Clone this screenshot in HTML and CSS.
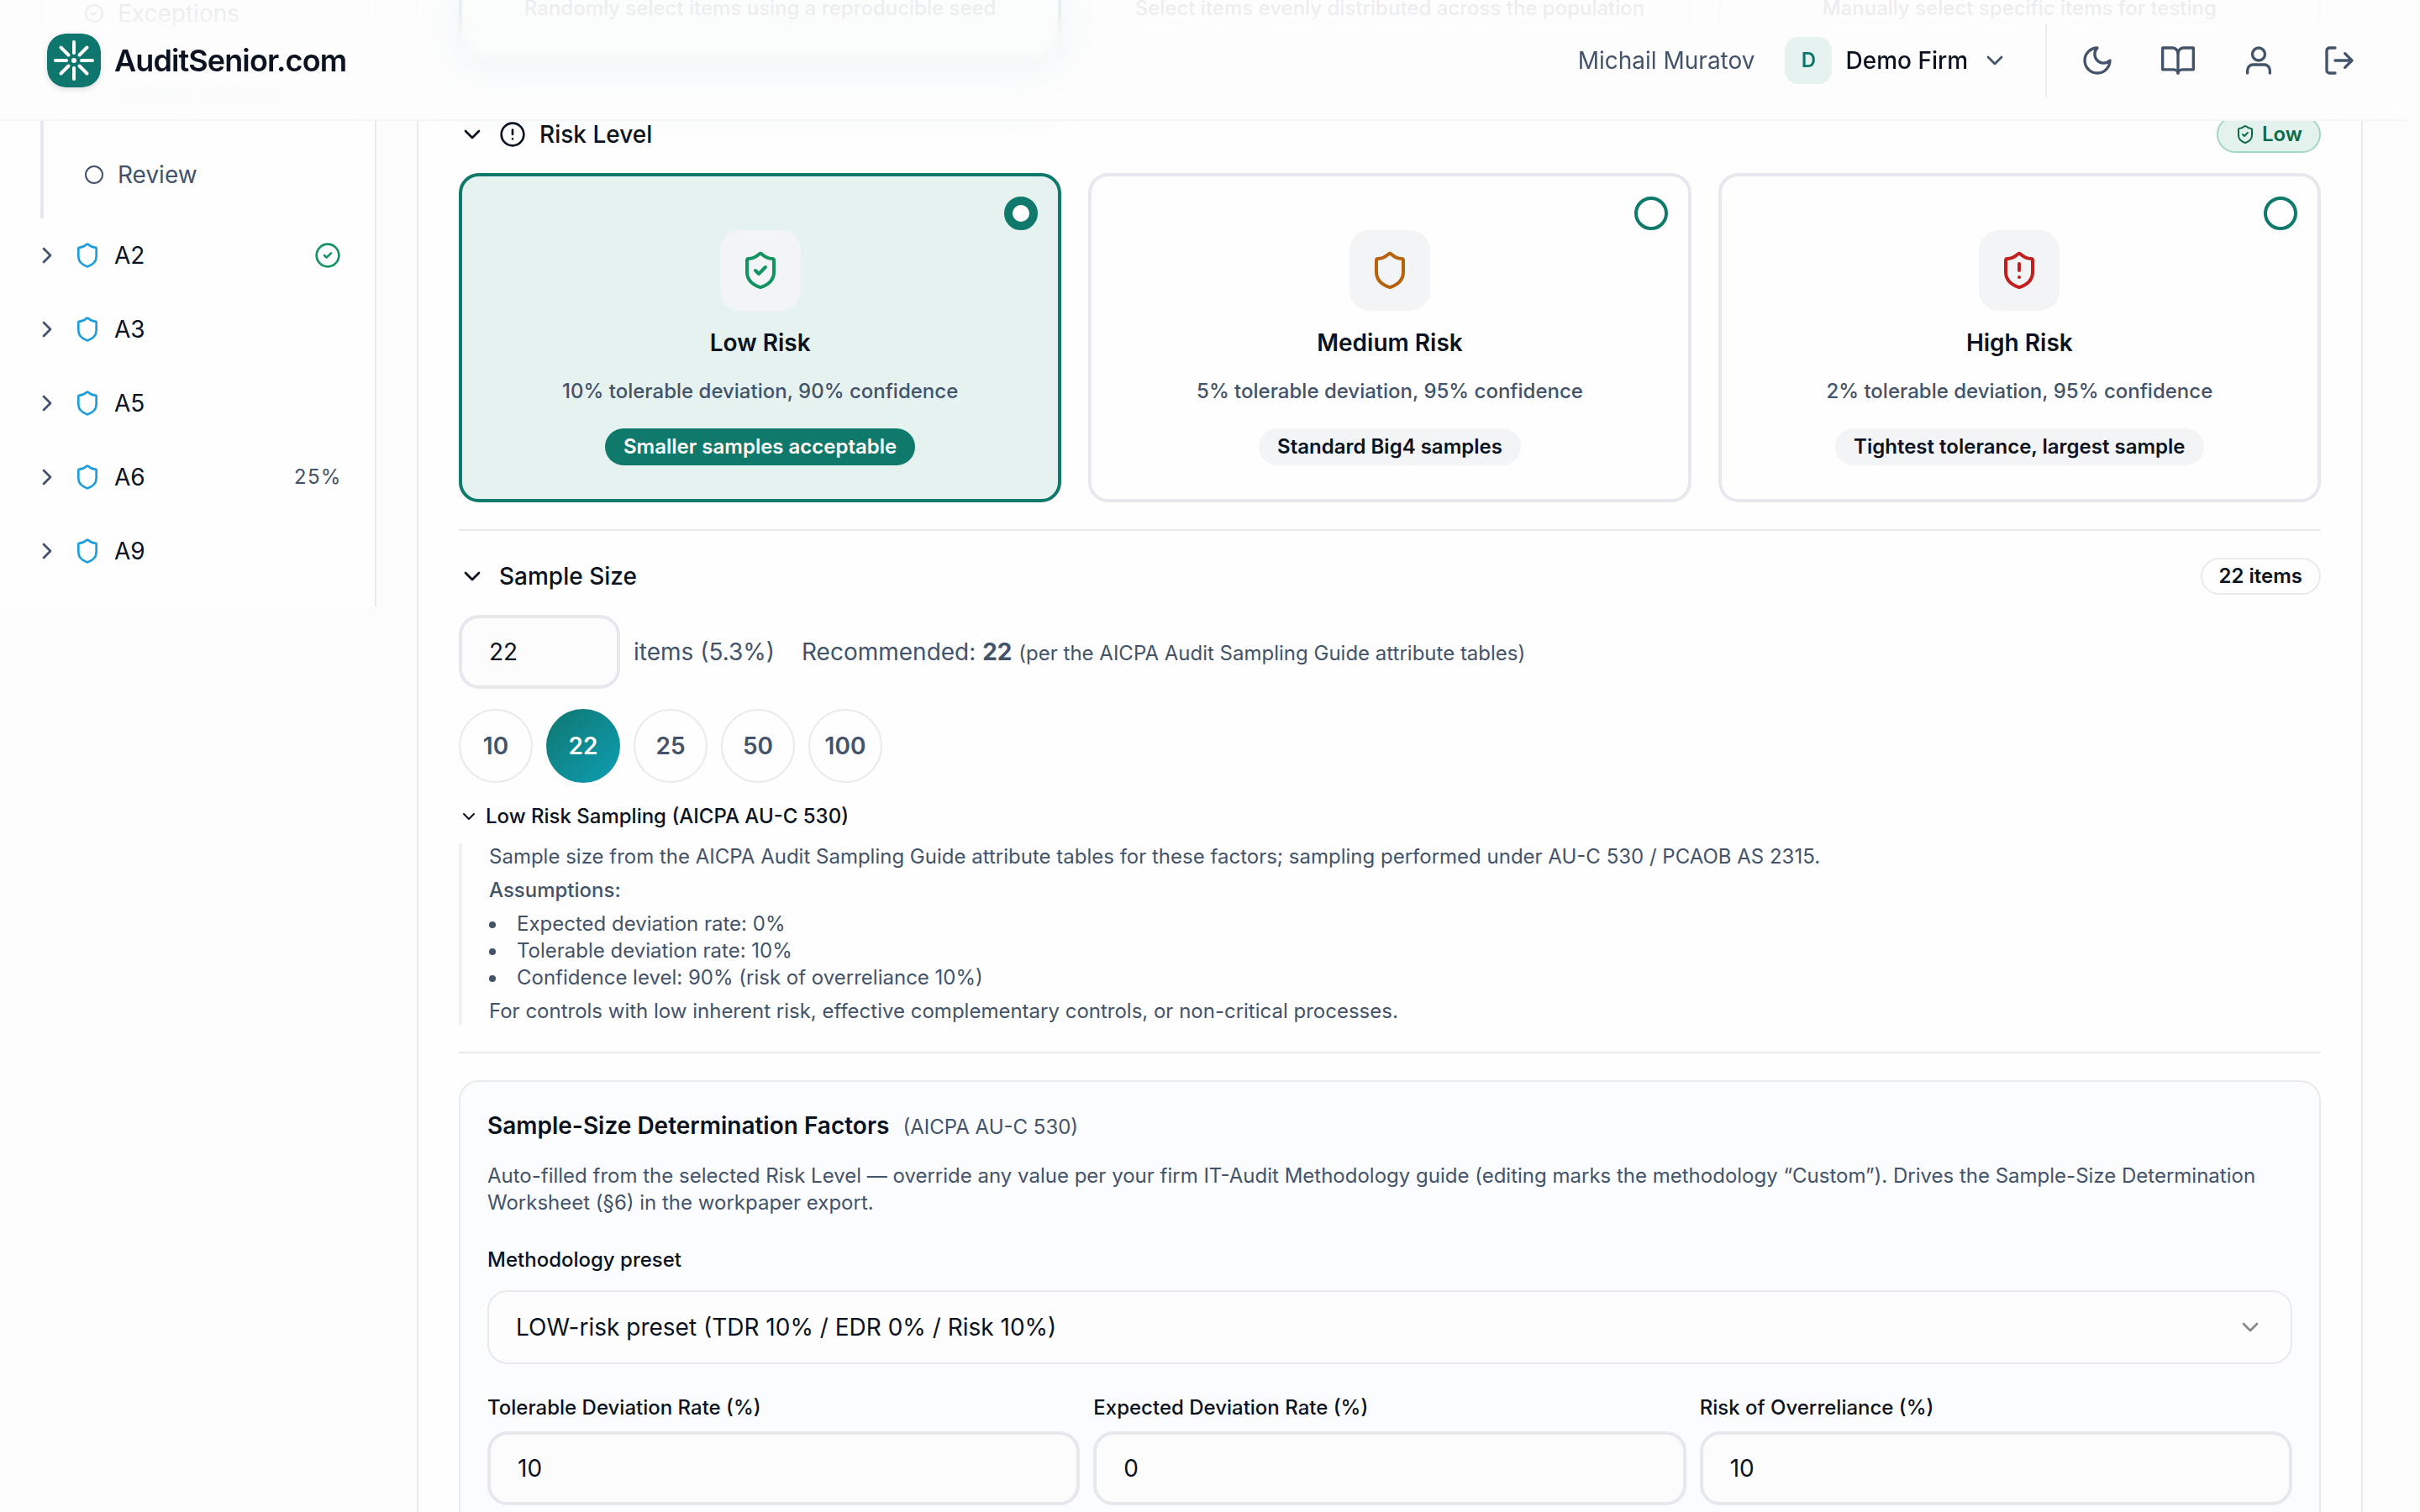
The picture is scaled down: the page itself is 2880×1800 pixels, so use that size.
FILE: index.html
```html
<!DOCTYPE html>
<html lang="en">
<head>
  <meta charset="UTF-8" />
  <title>AuditSenior.com</title>
  <link rel="stylesheet" href="styles.css">
</head>
<body>

<!-- Shared icons -->
<svg class="sprite" aria-hidden="true">
  <symbol id="i-down" viewBox="0 0 24 24"><path d="m6 9 6 6 6-6"/></symbol>
  <symbol id="i-right" viewBox="0 0 24 24"><path d="m9 18 6-6-6-6"/></symbol>
  <symbol id="i-circle" viewBox="0 0 24 24"><circle cx="12" cy="12" r="10"/></symbol>
  <symbol id="i-circle-check" viewBox="0 0 24 24"><circle cx="12" cy="12" r="10"/><path d="m9 12 2 2 4-4"/></symbol>
  <symbol id="i-alert" viewBox="0 0 24 24"><circle cx="12" cy="12" r="10"/><path d="M12 8v4M12 16h.01"/></symbol>
  <symbol id="i-shield" viewBox="0 0 24 24"><path d="M20 13c0 5-3.5 7.5-7.66 8.95a1 1 0 0 1-.67-.01C7.5 20.5 4 18 4 13V6a1 1 0 0 1 1-1c2 0 4.5-1.2 6.24-2.72a1.17 1.17 0 0 1 1.52 0C14.51 3.81 17 5 19 5a1 1 0 0 1 1 1z"/></symbol>
  <symbol id="i-shield-check" viewBox="0 0 24 24"><use href="#i-shield"/><path d="m9 12 2 2 4-4"/></symbol>
  <symbol id="i-shield-alert" viewBox="0 0 24 24"><use href="#i-shield"/><path d="M12 8v4M12 16h.01"/></symbol>
</svg>

<header class="topbar">
  <a class="brand" href="#">
    <svg class="brand-mark" viewBox="0 0 64 64" aria-hidden="true">
      <rect width="64" height="64" rx="22" fill="#0f766e"/>
      <g stroke="#fff" stroke-width="4" stroke-linecap="round">
        <path d="M32 10v13M32 41v13M10 32h13M41 32h13"/>
        <path d="M16.5 16.5l9 9M38.500 38.500l9 9M47.500 16.500l-9 9M25.500 38.500l-9 9"/>
      </g>
      <circle cx="32" cy="32" r="3" fill="#fff"/>
    </svg>
    <span>AuditSenior.com</span>
  </a>
  <div class="topbar-right">
    <span class="user-name">Michail Muratov</span>
    <button class="firm">
      <span class="firm-avatar">D</span>
      <span>Demo Firm</span>
      <svg class="icon muted"><use href="#i-down"/></svg>
    </button>
    <nav class="tools">
      <button class="tool" aria-label="Theme">
        <svg class="icon icon-lg" viewBox="0 0 24 24"><path d="M12 3a6 6 0 0 0 9 9 9 9 0 1 1-9-9Z"/></svg>
      </button>
      <button class="tool" aria-label="Guide">
        <svg class="icon icon-lg" viewBox="0 0 24 24"><path d="M12 7v14"/><path d="M12 7a4 4 0 0 0-4-4H1v15.500h8a3 3 0 0 1 3 2.500 3 3 0 0 1 3-2.500h8V3h-7a4 4 0 0 0-4 4z"/></svg>
      </button>
      <button class="tool" aria-label="Profile">
        <svg class="icon icon-lg" viewBox="0 0 24 24"><circle cx="12" cy="7.500" r="4.500"/><path d="M20 21v-2a4 4 0 0 0-4-4H8a4 4 0 0 0-4 4v2"/></svg>
      </button>
      <button class="tool" aria-label="Sign out">
        <svg class="icon icon-lg" viewBox="0 0 24 24"><path d="M9 21H5a2 2 0 0 1-2-2V5a2 2 0 0 1 2-2h4"/><path d="m16 17 5-5-5-5M21 12H9"/></svg>
      </button>
    </nav>
  </div>
</header>

<div class="layout">
  <aside class="sidebar">
    <div class="steps">
      <a class="step" href="#"><svg class="icon icon-sm"><use href="#i-circle-check"/></svg>Exceptions</a>
      <a class="step" href="#"><svg class="icon icon-sm"><use href="#i-circle"/></svg>Quality Review</a>
      <a class="step" href="#"><svg class="icon icon-sm"><use href="#i-circle"/></svg>Review</a>
    </div>
    <a class="area" href="#">
      <svg class="icon muted"><use href="#i-right"/></svg><svg class="icon blue"><use href="#i-shield"/></svg>
      <span>A2</span><svg class="icon green end"><use href="#i-circle-check"/></svg>
    </a>
    <a class="area" href="#">
      <svg class="icon muted"><use href="#i-right"/></svg><svg class="icon blue"><use href="#i-shield"/></svg>
      <span>A3</span>
    </a>
    <a class="area" href="#">
      <svg class="icon muted"><use href="#i-right"/></svg><svg class="icon blue"><use href="#i-shield"/></svg>
      <span>A5</span>
    </a>
    <a class="area" href="#">
      <svg class="icon muted"><use href="#i-right"/></svg><svg class="icon blue"><use href="#i-shield"/></svg>
      <span>A6</span><span class="percent end">25%</span>
    </a>
    <a class="area" href="#">
      <svg class="icon muted"><use href="#i-right"/></svg><svg class="icon blue"><use href="#i-shield"/></svg>
      <span>A9</span>
    </a>
  </aside>

  <main class="panel">
    <!-- Sampling method -->
    <section class="section section-first">
      <div class="cards">
        <div class="method method-on">Randomly select items using a reproducible seed</div>
        <div class="method">Select items evenly distributed across the population</div>
        <div class="method">Manually select specific items for testing</div>
      </div>
    </section>

    <!-- Risk level -->
    <section class="section">
      <div class="section-head">
        <button class="toggle">
          <svg class="icon"><use href="#i-down"/></svg>
          <svg class="icon"><use href="#i-alert"/></svg>
          <span>Risk Level</span>
        </button>
        <span class="badge badge-low"><svg class="icon icon-sm"><use href="#i-shield-check"/></svg>Low</span>
      </div>
      <div class="cards">
        <label class="risk risk-on">
          <input class="risk-radio" type="radio" name="risk" checked>
          <span class="risk-icon green"><svg class="icon icon-xl"><use href="#i-shield-check"/></svg></span>
          <span class="risk-title">Low Risk</span>
          <span class="risk-text">10% tolerable deviation, 90% confidence</span>
          <span class="pill">Smaller samples acceptable</span>
        </label>
        <label class="risk">
          <input class="risk-radio" type="radio" name="risk">
          <span class="risk-icon amber"><svg class="icon icon-xl"><use href="#i-shield"/></svg></span>
          <span class="risk-title">Medium Risk</span>
          <span class="risk-text">5% tolerable deviation, 95% confidence</span>
          <span class="pill">Standard Big4 samples</span>
        </label>
        <label class="risk">
          <input class="risk-radio" type="radio" name="risk">
          <span class="risk-icon red"><svg class="icon icon-xl"><use href="#i-shield-alert"/></svg></span>
          <span class="risk-title">High Risk</span>
          <span class="risk-text">2% tolerable deviation, 95% confidence</span>
          <span class="pill">Tightest tolerance, largest sample</span>
        </label>
      </div>
    </section>

    <!-- Sample size -->
    <section class="section">
      <div class="section-head">
        <button class="toggle">
          <svg class="icon"><use href="#i-down"/></svg>
          <span>Sample Size</span>
        </button>
        <span class="badge">22 items</span>
      </div>
      <div class="size-row">
        <input class="field size-input" id="size" type="text" inputmode="numeric" value="22">
        <label for="size">items (5.3%)</label>
        <p class="recommended">Recommended: <strong>22</strong> <small>(per the AICPA Audit Sampling Guide attribute tables)</small></p>
      </div>
      <div class="chips">
        <button class="chip">10</button>
        <button class="chip chip-on">22</button>
        <button class="chip">25</button>
        <button class="chip">50</button>
        <button class="chip">100</button>
      </div>
      <button class="details-toggle">
        <svg class="icon icon-sm"><use href="#i-down"/></svg>
        <span>Low Risk Sampling (AICPA AU-C 530)</span>
      </button>
      <div class="details">
        <p>Sample size from the AICPA Audit Sampling Guide attribute tables for these factors; sampling performed under AU-C 530 / PCAOB AS 2315.</p>
        <p class="details-strong">Assumptions:</p>
        <ul>
          <li>Expected deviation rate: 0%</li>
          <li>Tolerable deviation rate: 10%</li>
          <li>Confidence level: 90% (risk of overreliance 10%)</li>
        </ul>
        <p>For controls with low inherent risk, effective complementary controls, or non-critical processes.</p>
      </div>
    </section>

    <!-- Determination factors -->
    <section class="factors">
      <h3>Sample-Size Determination Factors <small>(AICPA AU-C 530)</small></h3>
      <p class="factors-text">Auto-filled from the selected Risk Level — override any value per your firm IT-Audit Methodology guide (editing marks the methodology “Custom”). Drives the Sample-Size Determination Worksheet (§6) in the workpaper export.</p>
      <div class="preset">
        <label for="preset">Methodology preset</label>
        <div class="select">
          <select id="preset">
            <option>LOW-risk preset (TDR 10% / EDR 0% / Risk 10%)</option>
          </select>
          <svg class="icon select-arrow"><use href="#i-down"/></svg>
        </div>
      </div>
      <div class="rates">
        <div class="rate">
          <label for="tdr">Tolerable Deviation Rate (%)</label>
          <input class="field" id="tdr" type="text" inputmode="numeric" value="10">
        </div>
        <div class="rate">
          <label for="edr">Expected Deviation Rate (%)</label>
          <input class="field" id="edr" type="text" inputmode="numeric" value="0">
        </div>
        <div class="rate">
          <label for="risk">Risk of Overreliance (%)</label>
          <input class="field" id="risk" type="text" inputmode="numeric" value="10">
        </div>
      </div>
    </section>
  </main>
</div>

</body>
</html>
```

FILE: styles.css
```css
* {
  margin: 0;
  padding: 0;
  box-sizing: border-box;
}

body {
  height: 100vh;
  overflow: hidden;
  padding-right: 16px;
  background: #fcfcfd;
  color: #0b1220;
  font-family: Inter, "Liberation Sans", sans-serif;
  font-size: 28px;
  line-height: 40px;
}

a {
  color: inherit;
  text-decoration: none;
}

button,
input,
select {
  font: inherit;
  color: inherit;
  background: none;
  border: 0;
}

/* Icons */
.sprite {
  display: none;
}

.icon {
  flex: none;
  width: 32px;
  height: 32px;
  fill: none;
  stroke: currentColor;
  stroke-width: 2;
  stroke-linecap: round;
  stroke-linejoin: round;
}

.icon-sm {
  width: 24px;
  height: 24px;
}

.icon-lg {
  width: 40px;
  height: 40px;
}

.icon-xl {
  width: 48px;
  height: 48px;
}

.muted { color: #43536a; }
.blue { color: #1c9fdb; }
.green { color: #12935f; }
.amber { color: #b8620e; }
.red { color: #c02020; }

.end {
  margin-left: auto;
}

/* Top bar */
.topbar {
  position: fixed;
  top: 0;
  left: 0;
  right: 16px;
  z-index: 10;
  height: 144px;
  padding: 2px 36px 0 56px;
  display: flex;
  align-items: center;
  justify-content: space-between;
  background: linear-gradient(rgba(253, 253, 253, 0.9), rgba(253, 253, 253, 0.96));
  border-bottom: 2px solid #f5f6f7;
}

/* Content scrolling under the bar gets softer towards its lower edge */
.topbar::before {
  content: "";
  position: absolute;
  inset: 0;
  z-index: -1;
  backdrop-filter: blur(8px);
  mask-image: linear-gradient(transparent 16px, #000 48px);
}

.brand {
  display: flex;
  align-items: center;
  gap: 16px;
  font-size: 36px;
  font-weight: 600;
  letter-spacing: -0.025em;
}

.brand-mark {
  width: 64px;
  height: 64px;
  border-radius: 22px;
  box-shadow: 0 2px 6px rgba(15, 23, 42, 0.15);
}

.topbar-right {
  display: flex;
  align-items: center;
}

.user-name {
  color: #43536a;
  margin-right: 12px;
}

.firm {
  display: flex;
  align-items: center;
  gap: 16px;
  padding: 0 24px;
  font-weight: 500;
}

.firm-avatar {
  width: 56px;
  height: 56px;
  border-radius: 16px;
  background: #e6f2f0;
  color: #0f766e;
  font-size: 24px;
  font-weight: 600;
  line-height: 56px;
}

.tools {
  display: flex;
  gap: 8px;
  margin-left: 20px;
  padding-left: 16px;
  border-left: 2px solid #eceef0;
}

.tool {
  width: 88px;
  height: 88px;
  display: flex;
  align-items: center;
  justify-content: center;
  color: #43536a;
}

/* Page starts scrolled below the top bar */
.layout {
  display: flex;
  align-items: flex-start;
  margin-top: -28px;
  padding-right: 52px;
}

.sidebar {
  flex: none;
  width: 448px;
  margin-right: 48px;
  padding: 0 40px 22px;
  background: #fefefe;
  border-right: 2px solid #e8eaed;
}

.steps {
  display: flex;
  flex-direction: column;
  gap: 8px;
  margin-left: 8px;
  padding: 0 0 8px 48px;
  border-left: 4px solid #e7e8ee;
}

.step,
.area {
  display: flex;
  align-items: center;
  gap: 16px;
  height: 88px;
}

.step {
  color: #43536a;
}

.percent {
  color: #43536a;
  font-size: 24px;
  font-variant-numeric: tabular-nums;
  letter-spacing: 0.025em;
}

/* Main panel */
.panel {
  flex: 1;
  padding: 0 48px;
  background: #fefefe;
  border: 2px solid #e8eaed;
  border-width: 0 2px;
}

.section {
  padding: 32px 0;
  border-bottom: 2px solid #e8eaed;
}

.section-first {
  padding-top: 0;
}

.section-head {
  display: flex;
  align-items: center;
  justify-content: space-between;
  height: 44px;
  margin-bottom: 24px;
}

.toggle {
  display: flex;
  align-items: center;
  gap: 16px;
  font-weight: 500;
}

.badge {
  display: flex;
  align-items: center;
  gap: 8px;
  height: 44px;
  padding: 0 20px;
  border: 2px solid #e8eaed;
  border-radius: 22px;
  font-size: 24px;
  font-weight: 600;
}

.badge-low {
  background: #e3f2ec;
  border-color: #a3d6c3;
  color: #0b6b47;
}

.cards {
  display: grid;
  grid-template-columns: repeat(3, 1fr);
  gap: 32px;
}

.method {
  padding: 18px 40px 42px;
  border: 4px solid #e7e8ee;
  border-radius: 24px;
  color: #43536a;
  font-size: 24px;
  font-weight: 500;
  line-height: 32px;
  text-align: center;
}

.method-on {
  background: #e6f2f0;
  border-color: #0f766e;
  box-shadow: 0 16px 60px rgba(30, 90, 130, 0.8);
}

/* Risk cards */
.risk {
  position: relative;
  display: flex;
  flex-direction: column;
  align-items: center;
  padding: 64px 40px 40px;
  border: 4px solid #e7e8ee;
  border-radius: 24px;
  background: #fefefe;
  cursor: pointer;
}

.risk-on {
  background: #e6f2f0;
  border-color: #0f7a6c;
}

.risk-radio {
  appearance: none;
  position: absolute;
  top: 24px;
  right: 24px;
  width: 40px;
  height: 40px;
  border: 4px solid #0f7a6c;
  border-radius: 50%;
}

.risk-radio:checked {
  border-width: 10px;
  background: #fff;
}

.risk-icon {
  width: 96px;
  height: 96px;
  display: flex;
  align-items: center;
  justify-content: center;
  border-radius: 24px;
  background: #f3f4f6;
}

.risk-title {
  margin: 18px 0 22px;
  font-weight: 600;
}

.risk-text {
  margin-bottom: 28px;
  color: #43536a;
  font-size: 24px;
  font-weight: 500;
  line-height: 32px;
}

.pill {
  padding: 0 22px;
  border-radius: 22px;
  background: #f3f4f6;
  font-size: 24px;
  font-weight: 600;
  line-height: 44px;
}

.risk-on .pill {
  background: #0f7a6c;
  color: #fff;
}

/* Sample size */
.field {
  width: 100%;
  height: 88px;
  padding: 0 32px;
  border: 4px solid #e7e8ee;
  border-radius: 24px;
  background: #fcfcfd;
}

.size-row {
  display: flex;
  align-items: center;
  gap: 16px;
  color: #43536a;
}

.size-input {
  width: 192px;
  color: #0b1220;
}

.recommended {
  margin-left: 16px;
}

.recommended small {
  font-size: 24px;
  line-height: 32px;
}

.chips {
  display: flex;
  gap: 16px;
  margin: 24px 0;
}

.chip {
  width: 88px;
  height: 88px;
  border: 2px solid #e8eaed;
  border-radius: 50%;
  color: #43536a;
  font-weight: 600;
}

.chip-on {
  border: 0;
  background: linear-gradient(135deg, #0f766e, #0e9fb5);
  color: #fff;
}

.details-toggle {
  display: flex;
  align-items: center;
  gap: 8px;
  font-size: 24px;
  font-weight: 500;
  line-height: 32px;
}

.details {
  display: flex;
  flex-direction: column;
  gap: 8px;
  margin-top: 16px;
  padding-left: 32px;
  border-left: 4px solid #f0f1f3;
  color: #43536a;
  font-size: 24px;
  line-height: 32px;
}

.details-strong {
  font-weight: 500;
}

.details ul {
  list-style-position: inside;
}

/* Determination factors */
.factors {
  margin-top: 32px;
  padding: 32px;
  border: 2px solid #e8eaed;
  border-radius: 24px;
  background: #fbfcfe;
}

.factors h3 {
  display: flex;
  align-items: baseline;
  gap: 16px;
  font-size: 28px;
  font-weight: 600;
}

.factors h3 small {
  color: #43536a;
  font-size: 24px;
  font-weight: 400;
  line-height: 32px;
}

.factors-text {
  margin: 24px 0 36px;
  color: #43536a;
  font-size: 24px;
  line-height: 32px;
}

.factors label {
  display: block;
  margin-bottom: 12px;
  font-size: 24px;
  font-weight: 500;
  line-height: 32px;
}

.factors .preset label {
  margin-bottom: 20px;
}

.select {
  position: relative;
}

.select select {
  appearance: none;
  display: block;
  width: 100%;
  height: 88px;
  padding: 0 32px;
  border: 2px solid #e8eaed;
  border-radius: 24px;
  background: #fdfdfd;
}

.select-arrow {
  position: absolute;
  top: 28px;
  right: 34px;
  color: #85888d;
  pointer-events: none;
}

.rates {
  display: grid;
  grid-template-columns: repeat(3, 1fr);
  gap: 16px;
  margin-top: 36px;
}
```
